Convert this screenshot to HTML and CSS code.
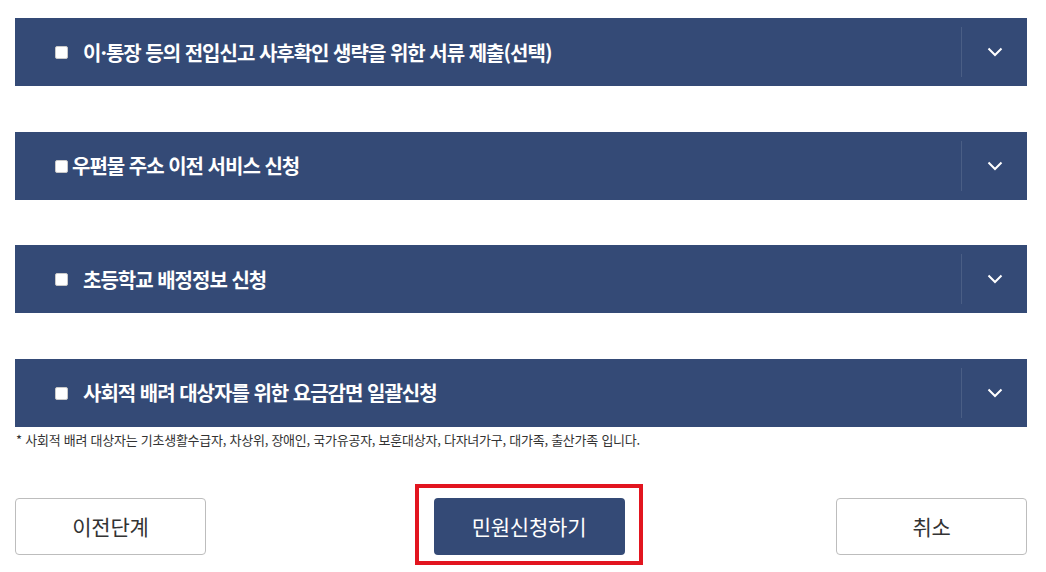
FILE: index.html
```html
<!DOCTYPE html>
<html lang="ko">
<head>
    <meta charset="UTF-8">
    <meta name="viewport" content="width=device-width, initial-scale=1.0">
    <title>민원신청</title>
    <link rel="stylesheet" href="styles.css">
</head>
<body>
    <div class="apply-wrap">
        <ul class="option-list">
            <li class="option-bar">
                <label class="option-title">
                    <input type="checkbox" class="option-check">
                    <span class="gap">이·통장 등의 전입신고 사후확인 생략을 위한 서류 제출(선택)</span>
                </label>
                <button class="toggle" aria-label="열기">
                    <svg width="16" height="10" viewBox="0 0 16 10"><path d="M1.5 1.5 L8 8 L14.5 1.5" fill="none" stroke="#fff" stroke-width="2"/></svg>
                </button>
            </li>
            <li class="option-bar">
                <label class="option-title">
                    <input type="checkbox" class="option-check">
                    <span class="tight">우편물 주소 이전 서비스 신청</span>
                </label>
                <button class="toggle" aria-label="열기">
                    <svg width="16" height="10" viewBox="0 0 16 10"><path d="M1.5 1.5 L8 8 L14.5 1.5" fill="none" stroke="#fff" stroke-width="2"/></svg>
                </button>
            </li>
            <li class="option-bar">
                <label class="option-title">
                    <input type="checkbox" class="option-check">
                    <span class="gap">초등학교 배정정보 신청</span>
                </label>
                <button class="toggle" aria-label="열기">
                    <svg width="16" height="10" viewBox="0 0 16 10"><path d="M1.5 1.5 L8 8 L14.5 1.5" fill="none" stroke="#fff" stroke-width="2"/></svg>
                </button>
            </li>
            <li class="option-bar">
                <label class="option-title">
                    <input type="checkbox" class="option-check">
                    <span class="gap">사회적 배려 대상자를 위한 요금감면 일괄신청</span>
                </label>
                <button class="toggle" aria-label="열기">
                    <svg width="16" height="10" viewBox="0 0 16 10"><path d="M1.5 1.5 L8 8 L14.5 1.5" fill="none" stroke="#fff" stroke-width="2"/></svg>
                </button>
            </li>
        </ul>
        <p class="note">* 사회적 배려 대상자는 기초생활수급자, 차상위, 장애인, 국가유공자, 보훈대상자, 다자녀가구, 대가족, 출산가족 입니다.</p>

        <div class="btn-row">
            <button class="btn btn-line">이전단계</button>
            <div class="highlight">
                <button class="btn btn-primary">민원신청하기</button>
            </div>
            <button class="btn btn-line">취소</button>
        </div>
    </div>
</body>
</html>
```

FILE: styles.css
```css
body {
    margin: 0;
    background-color: #fff;
    font-family: "Noto Sans CJK KR", "Noto Sans", sans-serif;
    color: #333;
}

.apply-wrap {
    width: 1012px;
    padding: 18px 0 0 15px;
}

.option-list {
    list-style: none;
    margin: 0;
    padding: 0;
    display: flex;
    flex-direction: column;
    gap: 45.5px;
}

.option-bar {
    display: flex;
    align-items: center;
    height: 68px;
    background-color: #344a76;
}

.option-title {
    flex: 1;
    display: flex;
    align-items: center;
    padding-left: 40px;
    color: #fff;
    font-size: 20px;
    font-weight: bold;
    letter-spacing: -1px;
    cursor: pointer;
}

.option-check {
    appearance: none;
    width: 13px;
    height: 13px;
    margin: 1px 0 0 0;
    background: #fff;
    border: 1px solid #c9c9c9;
    border-radius: 2px;
}

.option-title .gap {
    margin-left: 15px;
}

.option-title .tight {
    margin-left: 4px;
}

.toggle {
    width: 66px;
    height: 50px;
    border: none;
    border-left: 1px solid #4a5e85;
    background: transparent;
    display: flex;
    align-items: center;
    justify-content: center;
    padding: 0;
    cursor: pointer;
}

.note {
    margin: 5px 0 0 1px;
    font-size: 13px;
    line-height: 16px;
    letter-spacing: -0.25px;
    color: #333;
}

.btn-row {
    display: flex;
    justify-content: space-between;
    align-items: flex-start;
    margin-top: 36px;
}

.btn {
    width: 191px;
    height: 57px;
    font-family: inherit;
    font-size: 21px;
    letter-spacing: -0.2px;
    border-radius: 4px;
    cursor: pointer;
}

.btn-line {
    margin-top: 14px;
    background: #fff;
    color: #333;
    border: 1px solid #bdbdbd;
}

.btn-primary {
    display: block;
    background: #344a76;
    color: #fff;
    border: none;
}

.highlight {
    margin-left: 15px;
    padding: 10px 14px 6px 15px;
    border: 4px solid #e2151f;
}
```
